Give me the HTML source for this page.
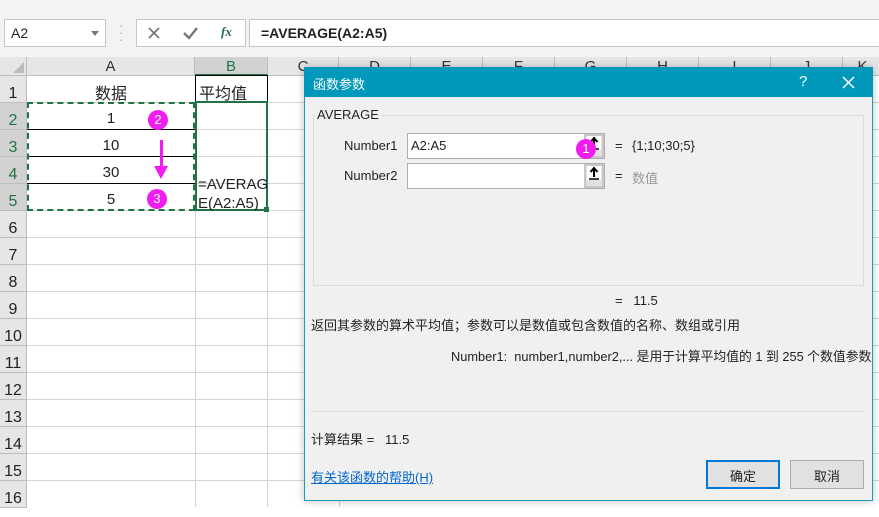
<!DOCTYPE html>
<html><head><meta charset="utf-8"><style>
*{margin:0;padding:0;box-sizing:border-box}
body{width:879px;height:507px;overflow:hidden;background:#fff;font-family:"Liberation Sans","Noto Sans CJK SC",sans-serif;position:relative}
.a{position:absolute}
.t{position:absolute;white-space:nowrap}
.hl{position:absolute;height:1px;background:#d4d4d4}
.vl{position:absolute;width:1px;background:#d4d4d4}
.rh{position:absolute;left:0;width:27px;height:27px;background:#e6e6e6;border-bottom:1px solid #bdbdbd;border-right:1px solid #bdbdbd;font-size:16px;color:#222;text-align:center;line-height:36px}
.ch{position:absolute;top:57px;height:19px;background:#e6e6e6;border-right:1px solid #bdbdbd;border-bottom:1px solid #bdbdbd;font-size:15px;color:#333;text-align:center;line-height:20px}
.cell{position:absolute;font-size:15px;color:#222;text-align:center}
.dot{position:absolute;width:20px;height:20px;border-radius:50%;background:#f01cf0;color:#fff;font-size:13px;text-align:center;line-height:20px}
.dlg{font-size:13px;color:#222}
</style></head><body>
<!-- toolbar -->
<div class="a" style="left:0;top:0;width:879px;height:57px;background:#f3f3f3"></div>
<div class="a" style="left:4px;top:19px;width:102px;height:28px;background:#fff;border:1px solid #c6c6c6"></div>
<div class="t" style="left:11px;top:25px;font-size:14px;color:#222">A2</div>
<div class="a" style="left:91px;top:31px;border-left:4px solid transparent;border-right:4px solid transparent;border-top:5px solid #777"></div>
<div class="t" style="left:119px;top:22px;color:#aaa;font-size:13px;line-height:7px">·<br>·<br>·</div>
<div class="a" style="left:136px;top:19px;width:110px;height:28px;background:#fff;border:1px solid #c6c6c6"></div>
<svg class="a" style="left:136px;top:19px" width="110" height="28"><path d="M13 9 L23 19 M23 9 L13 19" stroke="#777" stroke-width="1.8"/><path d="M48 14 L53 19 L61 9" stroke="#777" stroke-width="2.4" fill="none"/></svg>
<div class="t" style="left:221px;top:24px;font-size:13px;color:#217346;font-style:italic;font-family:'Liberation Serif',serif;font-weight:bold">fx</div>
<div class="a" style="left:249px;top:19px;width:640px;height:28px;background:#fff;border:1px solid #c6c6c6"></div>
<div class="t" style="left:261px;top:25px;font-size:14px;color:#222;font-weight:bold">=AVERAGE(A2:A5)</div>
<!-- column headers -->
<div class="a" style="left:0;top:57px;width:27px;height:19px;background:#e6e6e6;border-right:1px solid #bdbdbd;border-bottom:1px solid #bdbdbd"></div>
<div class="a" style="left:13px;top:62px;border-left:11px solid transparent;border-bottom:11px solid #bbb"></div>
<div class="ch" style="left:27px;width:168px">A</div>
<div class="ch" style="left:195px;width:73px;background:#d2d2d2;border-bottom:2px solid #217346;color:#217346">B</div>
<div class="ch" style="left:268px;width:71px">C</div>
<div class="ch" style="left:339px;width:72px">D</div>
<div class="ch" style="left:411px;width:72px">E</div>
<div class="ch" style="left:483px;width:72px">F</div>
<div class="ch" style="left:555px;width:72px">G</div>
<div class="ch" style="left:627px;width:72px">H</div>
<div class="ch" style="left:699px;width:72px">I</div>
<div class="ch" style="left:771px;width:72px">J</div>
<div class="ch" style="left:843px;width:40px">K</div>
<!-- grid -->
<div class="vl" style="left:195px;top:76px;height:431px"></div>
<div class="vl" style="left:267px;top:76px;height:431px"></div>
<div class="vl" style="left:339px;top:76px;height:431px"></div>
<div class="hl" style="left:27px;top:102px;width:852px"></div>
<div class="hl" style="left:27px;top:129px;width:852px"></div>
<div class="hl" style="left:27px;top:156px;width:852px"></div>
<div class="hl" style="left:27px;top:183px;width:852px"></div>
<div class="hl" style="left:27px;top:210px;width:852px"></div>
<div class="hl" style="left:27px;top:237px;width:852px"></div>
<div class="hl" style="left:27px;top:264px;width:852px"></div>
<div class="hl" style="left:27px;top:291px;width:852px"></div>
<div class="hl" style="left:27px;top:318px;width:852px"></div>
<div class="hl" style="left:27px;top:345px;width:852px"></div>
<div class="hl" style="left:27px;top:372px;width:852px"></div>
<div class="hl" style="left:27px;top:399px;width:852px"></div>
<div class="hl" style="left:27px;top:426px;width:852px"></div>
<div class="hl" style="left:27px;top:453px;width:852px"></div>
<div class="hl" style="left:27px;top:480px;width:852px"></div>
<!-- row headers -->
<div class="rh" style="top:76px">1</div>
<div class="rh" style="top:103px;background:#d2d2d2;color:#217346">2</div>
<div class="rh" style="top:130px;background:#d2d2d2;color:#217346">3</div>
<div class="rh" style="top:157px;background:#d2d2d2;color:#217346">4</div>
<div class="rh" style="top:184px;background:#d2d2d2;color:#217346">5</div>
<div class="rh" style="top:211px">6</div>
<div class="rh" style="top:238px">7</div>
<div class="rh" style="top:265px">8</div>
<div class="rh" style="top:292px">9</div>
<div class="rh" style="top:319px">10</div>
<div class="rh" style="top:346px">11</div>
<div class="rh" style="top:373px">12</div>
<div class="rh" style="top:400px">13</div>
<div class="rh" style="top:427px">14</div>
<div class="rh" style="top:454px">15</div>
<div class="rh" style="top:481px">16</div>
<!-- cells -->
<div class="cell" style="left:27px;top:80px;width:168px;font-size:16px">数据</div>
<div class="a" style="left:195px;top:75px;width:73px;height:28px;border:1px solid #000"></div>
<div class="t" style="left:199px;top:80px;font-size:16px;color:#222">平均值</div>
<div class="a" style="left:27px;top:129px;width:168px;height:1px;background:#000"></div>
<div class="a" style="left:27px;top:156px;width:168px;height:1px;background:#000"></div>
<div class="a" style="left:27px;top:183px;width:168px;height:1px;background:#000"></div>
<div class="cell" style="left:27px;top:110px;width:168px">1</div>
<div class="cell" style="left:27px;top:137px;width:168px">10</div>
<div class="cell" style="left:27px;top:164px;width:168px">30</div>
<div class="cell" style="left:27px;top:191px;width:168px">5</div>
<div class="a" style="left:27px;top:102px;width:168px;height:109px;border:2px dashed #217346"></div>
<div class="a" style="left:195px;top:101px;width:73px;height:110px;border:2px solid #217346"></div>
<div class="a" style="left:264px;top:207px;width:5px;height:5px;background:#217346"></div>
<div class="t" style="left:198px;top:176px;font-size:15px;color:#222">=AVERAG</div>
<div class="t" style="left:198px;top:195px;font-size:15px;color:#222">E(A2:A5)</div>
<div class="dot" style="left:148px;top:110px">2</div>
<div class="dot" style="left:147px;top:189px">3</div>
<div class="a" style="left:160px;top:140px;width:3px;height:30px;background:#f01cf0"></div>
<div class="a" style="left:154px;top:166px;border-left:7px solid transparent;border-right:7px solid transparent;border-top:13px solid #f01cf0"></div>
<!-- dialog -->
<div class="a" style="left:304px;top:67px;width:569px;height:434px;background:#f0f0f0;border:1px solid #1a9cc0;box-shadow:0 0 8px rgba(0,0,0,.25)"></div>
<div class="a" style="left:304px;top:67px;width:569px;height:30px;background:#0099bc"></div>
<div class="t" style="left:313px;top:74px;font-size:13px;color:#fff">函数参数</div>
<div class="t" style="left:799px;top:73px;font-size:15px;color:#fff">?</div>
<svg class="a" style="left:838px;top:73px" width="20" height="20"><path d="M5 4 L16 15 M16 4 L5 15" stroke="#fff" stroke-width="1.5"/></svg>
<div class="a" style="left:313px;top:115px;width:551px;height:171px;border:1px solid #dcdcdc"></div>
<div class="t dlg" style="left:315px;top:107px;background:#f0f0f0;padding:0 2px">AVERAGE</div>
<div class="t dlg" style="left:344px;top:138px">Number1</div>
<div class="t dlg" style="left:344px;top:168px">Number2</div>
<div class="a" style="left:407px;top:133px;width:198px;height:26px;background:#fff;border:1px solid #adadad"></div>
<div class="a" style="left:584px;top:134px;width:20px;height:24px;background:#e1e1e1;border:2px solid #c8c8c8"></div>
<div class="a" style="left:587px;top:136px;width:14px;height:14px;background:#fff"></div>
<svg class="a" style="left:587px;top:136px" width="14" height="16"><path d="M7 2 L7 11 M3.5 6 L7 2 L10.5 6" stroke="#000" stroke-width="2" fill="none"/><path d="M2 13 L12 13" stroke="#000" stroke-width="1.5"/></svg>
<div class="t dlg" style="left:411px;top:138px">A2:A5</div>
<div class="a" style="left:407px;top:163px;width:198px;height:26px;background:#fff;border:1px solid #adadad"></div>
<div class="a" style="left:584px;top:164px;width:20px;height:24px;background:#e1e1e1;border:2px solid #c8c8c8"></div>
<div class="a" style="left:587px;top:166px;width:14px;height:14px;background:#fff"></div>
<svg class="a" style="left:587px;top:166px" width="14" height="16"><path d="M7 2 L7 11 M3.5 6 L7 2 L10.5 6" stroke="#000" stroke-width="2" fill="none"/><path d="M2 13 L12 13" stroke="#000" stroke-width="1.5"/></svg>
<div class="dot" style="left:576px;top:139px">1</div>
<div class="t dlg" style="left:615px;top:138px">=</div>
<div class="t dlg" style="left:632px;top:138px">{1;10;30;5}</div>
<div class="t dlg" style="left:615px;top:168px">=</div>
<div class="t dlg" style="left:632px;top:168px;color:#999">数值</div>
<div class="t dlg" style="left:615px;top:293px">=&nbsp;&nbsp; 11.5</div>
<div class="t dlg" style="left:311px;top:315px">返回其参数的算术平均值；参数可以是数值或包含数值的名称、数组或引用</div>
<div class="t dlg" style="left:451px;top:346px;font-size:12.8px">Number1:&nbsp; number1,number2,... 是用于计算平均值的 1 到 255 个数值参数</div>
<div class="a" style="left:311px;top:411px;width:554px;height:1px;background:#dadada"></div>
<div class="t dlg" style="left:311px;top:429px">计算结果 =&nbsp;&nbsp; 11.5</div>
<div class="t dlg" style="left:311px;top:467px;color:#0066cc;text-decoration:underline">有关该函数的帮助(H)</div>
<div class="a" style="left:706px;top:460px;width:74px;height:29px;background:#e1e1e1;border:2px solid #0078d7"></div>
<div class="t dlg" style="left:730px;top:466px">确定</div>
<div class="a" style="left:790px;top:460px;width:74px;height:29px;background:#e1e1e1;border:1px solid #adadad"></div>
<div class="t dlg" style="left:814px;top:466px">取消</div>
</body></html>
